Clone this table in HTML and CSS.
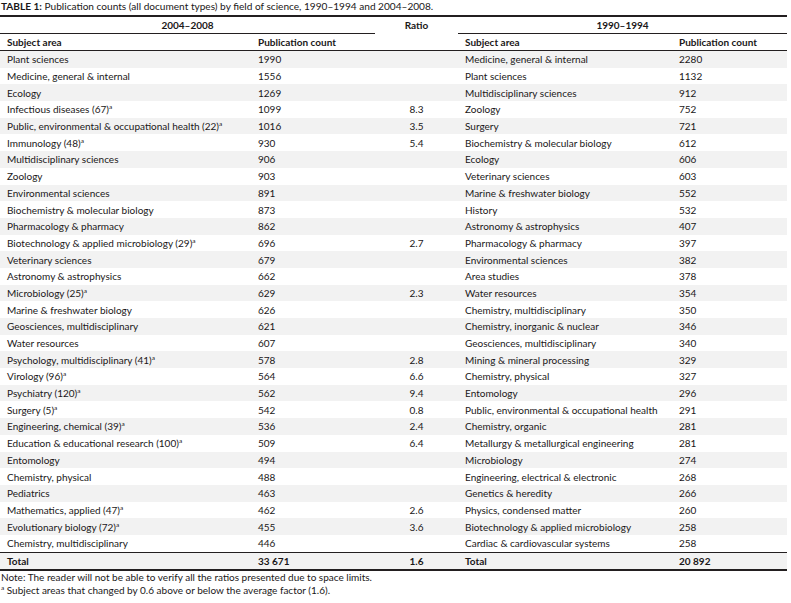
FILE: index.html
```html
<!DOCTYPE html>
<html>
<head>
<meta charset="utf-8">
<link rel="stylesheet" href="styles.css">
</head>
<body>
<div class="wrap">
<p class="caption"><b>TABLE 1:</b> Publication counts (all document types) by field of science, 1990–1994 and 2004–2008.</p>
<table class="tbl">
<colgroup>
<col class="c-subj1"><col class="c-cnt1"><col class="c-ratio"><col class="c-subj2"><col class="c-cnt2">
</colgroup>
<thead>
<tr class="grp">
<th colspan="2" class="g g-left">2004–2008</th>
<th rowspan="2" class="ratio-h">Ratio</th>
<th colspan="2" class="g g-right">1990–1994</th>
</tr>
<tr class="sub">
<th>Subject area</th><th>Publication count</th><th>Subject area</th><th>Publication count</th>
</tr>
</thead>
<tbody>
<tr><td>Plant sciences</td><td>1990</td><td class="r"></td><td>Medicine, general &amp; internal</td><td>2280</td></tr>
<tr><td>Medicine, general &amp; internal</td><td>1556</td><td class="r"></td><td>Plant sciences</td><td>1132</td></tr>
<tr><td>Ecology</td><td>1269</td><td class="r"></td><td>Multidisciplinary sciences</td><td>912</td></tr>
<tr><td>Infectious diseases (67)<sup>a</sup></td><td>1099</td><td class="r">8.3</td><td>Zoology</td><td>752</td></tr>
<tr><td>Public, environmental &amp; occupational health (22)<sup>a</sup></td><td>1016</td><td class="r">3.5</td><td>Surgery</td><td>721</td></tr>
<tr><td>Immunology (48)<sup>a</sup></td><td>930</td><td class="r">5.4</td><td>Biochemistry &amp; molecular biology</td><td>612</td></tr>
<tr><td>Multidisciplinary sciences</td><td>906</td><td class="r"></td><td>Ecology</td><td>606</td></tr>
<tr><td>Zoology</td><td>903</td><td class="r"></td><td>Veterinary sciences</td><td>603</td></tr>
<tr><td>Environmental sciences</td><td>891</td><td class="r"></td><td>Marine &amp; freshwater biology</td><td>552</td></tr>
<tr><td>Biochemistry &amp; molecular biology</td><td>873</td><td class="r"></td><td>History</td><td>532</td></tr>
<tr><td>Pharmacology &amp; pharmacy</td><td>862</td><td class="r"></td><td>Astronomy &amp; astrophysics</td><td>407</td></tr>
<tr><td>Biotechnology &amp; applied microbiology (29)<sup>a</sup></td><td>696</td><td class="r">2.7</td><td>Pharmacology &amp; pharmacy</td><td>397</td></tr>
<tr><td>Veterinary sciences</td><td>679</td><td class="r"></td><td>Environmental sciences</td><td>382</td></tr>
<tr><td>Astronomy &amp; astrophysics</td><td>662</td><td class="r"></td><td>Area studies</td><td>378</td></tr>
<tr><td>Microbiology (25)<sup>a</sup></td><td>629</td><td class="r">2.3</td><td>Water resources</td><td>354</td></tr>
<tr><td>Marine &amp; freshwater biology</td><td>626</td><td class="r"></td><td>Chemistry, multidisciplinary</td><td>350</td></tr>
<tr><td>Geosciences, multidisciplinary</td><td>621</td><td class="r"></td><td>Chemistry, inorganic &amp; nuclear</td><td>346</td></tr>
<tr><td>Water resources</td><td>607</td><td class="r"></td><td>Geosciences, multidisciplinary</td><td>340</td></tr>
<tr><td>Psychology, multidisciplinary (41)<sup>a</sup></td><td>578</td><td class="r">2.8</td><td>Mining &amp; mineral processing</td><td>329</td></tr>
<tr><td>Virology (96)<sup>a</sup></td><td>564</td><td class="r">6.6</td><td>Chemistry, physical</td><td>327</td></tr>
<tr><td>Psychiatry (120)<sup>a</sup></td><td>562</td><td class="r">9.4</td><td>Entomology</td><td>296</td></tr>
<tr><td>Surgery (5)<sup>a</sup></td><td>542</td><td class="r">0.8</td><td>Public, environmental &amp; occupational health</td><td>291</td></tr>
<tr><td>Engineering, chemical (39)<sup>a</sup></td><td>536</td><td class="r">2.4</td><td>Chemistry, organic</td><td>281</td></tr>
<tr><td>Education &amp; educational research (100)<sup>a</sup></td><td>509</td><td class="r">6.4</td><td>Metallurgy &amp; metallurgical engineering</td><td>281</td></tr>
<tr><td>Entomology</td><td>494</td><td class="r"></td><td>Microbiology</td><td>274</td></tr>
<tr><td>Chemistry, physical</td><td>488</td><td class="r"></td><td>Engineering, electrical &amp; electronic</td><td>268</td></tr>
<tr><td>Pediatrics</td><td>463</td><td class="r"></td><td>Genetics &amp; heredity</td><td>266</td></tr>
<tr><td>Mathematics, applied (47)<sup>a</sup></td><td>462</td><td class="r">2.6</td><td>Physics, condensed matter</td><td>260</td></tr>
<tr><td>Evolutionary biology (72)<sup>a</sup></td><td>455</td><td class="r">3.6</td><td>Biotechnology &amp; applied microbiology</td><td>258</td></tr>
<tr><td>Chemistry, multidisciplinary</td><td>446</td><td class="r"></td><td>Cardiac &amp; cardiovascular systems</td><td>258</td></tr>
</tbody>
<tfoot>
<tr class="total"><td>Total</td><td>33 671</td><td class="r">1.6</td><td>Total</td><td>20 892</td></tr>
</tfoot>
</table>
<p class="note">Note: The reader will not be able to verify all the ratios presented due to space limits.</p>
<p class="note"><sup>a</sup> Subject areas that changed by 0.6 above or below the average factor (1.6).</p>
</div>
</body>
</html>
```
FILE: styles.css
```css
html, body {
  margin: 0;
  padding: 0;
  background: #fff;
}
body {
  font-family: Lato, "Liberation Sans", sans-serif;
  font-size: 10px;
  color: #1a1718;
}
.wrap {
  width: 787px;
}
.caption {
  margin: 0;
  padding: 0 0 0 1px;
  height: 15px;
  line-height: 12px;
  font-size: 10.1px;
}
.caption b {
  font-weight: 700;
}
.tbl {
  width: 787px;
  border-collapse: collapse;
  table-layout: fixed;
  border-top: 2px solid #231f20;
  border-bottom: 2px solid #231f20;
}
.c-subj1 { width: 251px; }
.c-cnt1 { width: 124px; }
.c-ratio { width: 83px; }
.c-subj2 { width: 214px; }
.c-cnt2 { width: 115px; }
.tbl th, .tbl td {
  padding: 0 0 0 7px;
  text-align: left;
  white-space: nowrap;
  font-weight: 400;
}
.tbl th {
  font-weight: 700;
}
.grp th {
  height: 16px;
  line-height: 16px;
  text-align: center;
  padding: 0;
}
.grp .g {
  border-bottom: 1px solid #231f20;
}
.grp .ratio-h {
  vertical-align: top;
  border-bottom: 1px solid #231f20;
}
.sub th {
  height: 16px;
  line-height: 16px;
  border-bottom: 1px solid #231f20;
}
.tbl tbody td {
  height: 16.7px;
  line-height: 16px;
}
.tbl tbody tr:nth-child(odd) td {
  background: #f2f2f2;
}
.tbl td.r {
  text-align: center;
  padding: 0;
}
.tbl .total td {
  height: 16px;
  line-height: 16px;
  font-weight: 700;
  background: #f2f2f2;
  border-top: 1px solid #231f20;
}
sup {
  font-size: 6.5px;
  line-height: 0;
  vertical-align: 4px;
}
.note {
  margin: 0;
  padding: 0 0 0 1px;
  line-height: 13px;
}
.note:first-of-type {
  margin-top: 2px;
}
```
